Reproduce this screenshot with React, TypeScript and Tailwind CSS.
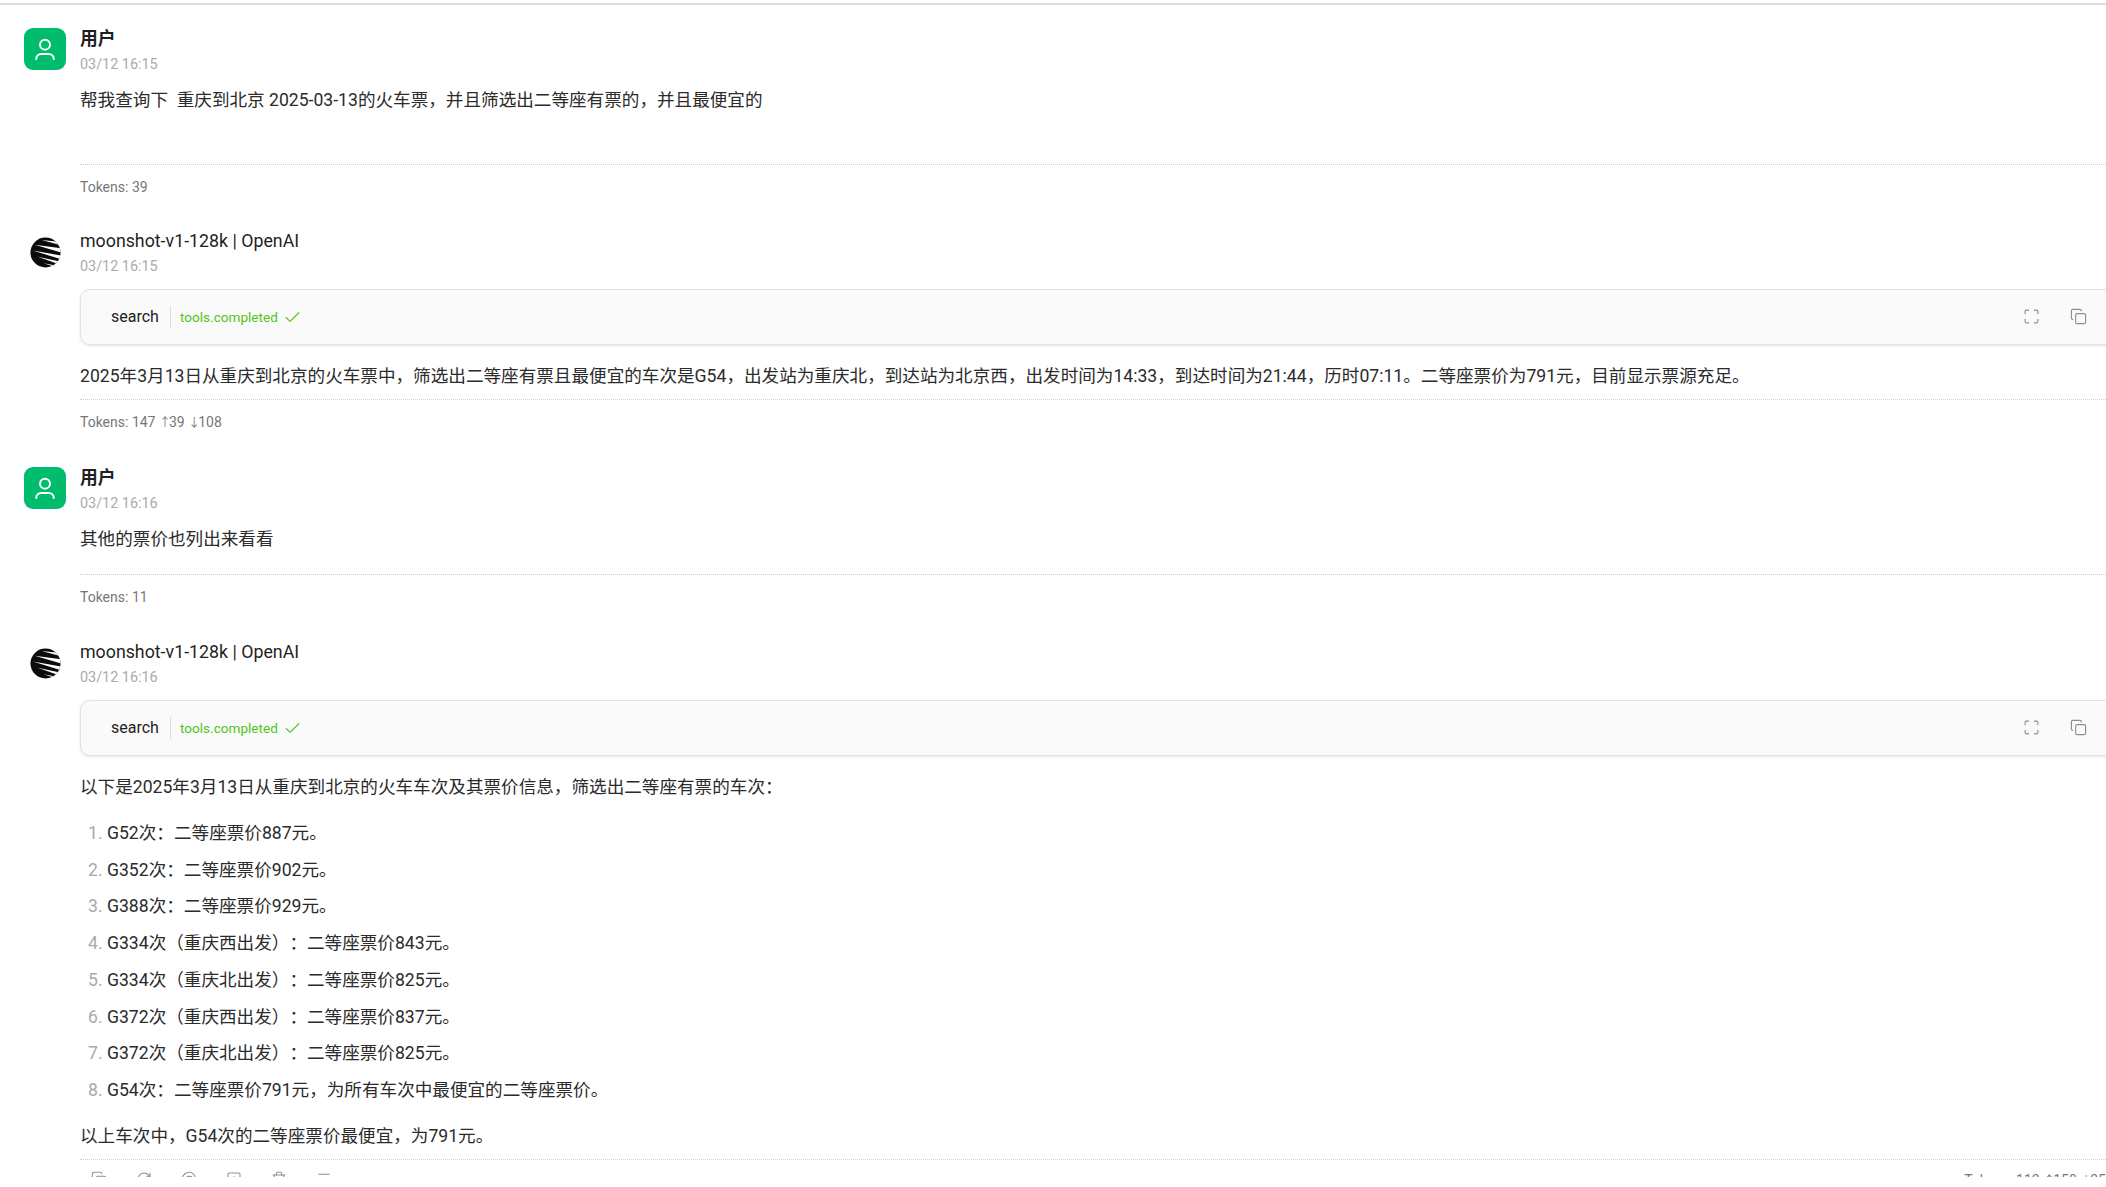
import { Check, Copy, Maximize, RotateCw, AtSign, SquarePlus, Trash2, Menu } from 'lucide-react';

const FONT = "font-['Roboto','Noto_Sans_CJK_SC',sans-serif]";
const BODY = 'text-[17.6px] leading-[28px] text-[#2b2b2b]';

function UserAvatar() {
  return (
    <div className="flex h-[42px] w-[42px] items-center justify-center rounded-[9px] bg-[#00bd6e]">
      <svg viewBox="0 0 24 24" width="30" height="30" fill="none" stroke="#fff" strokeWidth="1.6" strokeLinecap="round">
        <circle cx="12" cy="8.5" r="4" />
        <path d="M5 20c0-2.6 2-4 4-4h6c2 0 4 1.4 4 4" />
      </svg>
    </div>
  );
}

function MoonshotLogo() {
  return (
    <div className="flex h-[42px] w-[42px] items-center justify-center pt-[2px]">
      <svg viewBox="0 0 32 32" width="31" height="31">
        <defs>
          <clipPath id="moon">
            <circle cx="16" cy="16" r="15.5" />
          </clipPath>
        </defs>
        <circle cx="16" cy="16" r="15.5" fill="#0b0b0b" />
        <g clipPath="url(#moon)" fill="#fff">
          <path d="M12 3 34 5.5V9Z" />
          <path d="M5 8 34 12V16.5Z" />
          <path d="M3 14 34 19.5V23.5Z" />
          <path d="M8 20.5 34 26V29.5Z" />
          <path d="M14 27 32 30.5V33Z" />
        </g>
      </svg>
    </div>
  );
}

function Header({ avatar, name, time, bold }: { avatar: React.ReactNode; name: string; time: string; bold?: boolean }) {
  return (
    <div className="flex gap-[14px]">
      {avatar}
      <div className="-mt-[1px]">
        <div className={`h-[24px] text-[17.8px] leading-[24px] text-[#1f1f1f] ${bold ? 'font-bold' : 'font-normal'}`}>{name}</div>
        <div className="mt-[4px] text-[14.4px] leading-[20px] text-[#aaaaaa]">{time}</div>
      </div>
    </div>
  );
}

function ToolBar() {
  return (
    <div className="-mr-[10px] mt-[12px] flex h-[56px] items-center rounded-[10px] border border-[#e2e2e2] bg-[#fafafa] pl-[30px] pr-[28px] shadow-[0_1px_3px_rgba(0,0,0,0.1)]">
      <span className="pr-[11px] text-[16px] text-[#222222]">search</span>
      <span className="h-[22px] w-px bg-[#dddddd]" />
      <span className="pl-[9px] text-[13.6px] text-[#52c41a]">tools.completed</span>
      <Check size={19} strokeWidth={1.4} className="ml-[5px] text-[#52c41a]" />
      <span className="-mt-[1px] ml-auto flex items-center gap-[30px] text-[#8f8f8f]">
        <Maximize size={17} strokeWidth={1.6} />
        <Copy size={17} strokeWidth={1.6} />
      </span>
    </div>
  );
}

// arrows come from a fallback font at full width, squeeze them back
function TokenCount({ total, up, down }: { total: number; up?: number; down?: number }) {
  return (
    <>
      Tokens: {total}
      {up !== undefined && (
        <>
          {' '}
          <span className="text-[12px] tracking-[-2px]">↑</span>
          {up}
        </>
      )}
      {down !== undefined && (
        <>
          {' '}
          <span className="text-[12px] tracking-[-2px]">↓</span>
          {down}
        </>
      )}
    </>
  );
}

function Tokens({ className, children }: { className: string; children: React.ReactNode }) {
  return (
    <div className={`${className} border-t border-dotted border-[#cfcfcf] pt-[13px] text-[14px] leading-[18px] text-[#777777]`}>{children}</div>
  );
}

const FARES = [
  'G52次：二等座票价887元。',
  'G352次：二等座票价902元。',
  'G388次：二等座票价929元。',
  'G334次（重庆西出发）：二等座票价843元。',
  'G334次（重庆北出发）：二等座票价825元。',
  'G372次（重庆西出发）：二等座票价837元。',
  'G372次（重庆北出发）：二等座票价825元。',
  'G54次：二等座票价791元，为所有车次中最便宜的二等座票价。',
];

export default function App() {
  return (
    <div className={`h-[1187px] w-[2106px] overflow-hidden bg-white [text-spacing-trim:space-all] ${FONT}`}>
      <div className="mt-[3px] h-[1174px] overflow-hidden border-t-[2px] border-[#dddddd] pl-[24px]">
        {/* first user message */}
        <div className="pt-[23px]">
          <Header avatar={<UserAvatar />} name="用户" time="03/12 16:15" bold />
          <div className="pl-[56px]">
            <p className={`mt-[11px] ${BODY}`}>帮我查询下{'\u00a0'} 重庆到北京 2025-03-13的火车票，并且筛选出二等座有票的，并且最便宜的</p>
            <Tokens className="mt-[50px]">
              <TokenCount total={39} />
            </Tokens>
          </div>
        </div>

        {/* first answer */}
        <div className="pt-[34px]">
          <Header avatar={<MoonshotLogo />} name="moonshot-v1-128k | OpenAI" time="03/12 16:15" />
          <div className="pl-[56px]">
            <ToolBar />
            <p className={`mt-[17px] ${BODY}`}>2025年3月13日从重庆到北京的火车票中，筛选出二等座有票且最便宜的车次是G54，出发站为重庆北，到达站为北京西，出发时间为14:33，到达时间为21:44，历时07:11。二等座票价为791元，目前显示票源充足。</p>
            <Tokens className="mt-[9px]">
              <TokenCount total={147} up={39} down={108} />
            </Tokens>
          </div>
        </div>

        {/* second user message */}
        <div className="pt-[35px]">
          <Header avatar={<UserAvatar />} name="用户" time="03/12 16:16" bold />
          <div className="pl-[56px]">
            <p className={`mt-[11px] ${BODY}`}>其他的票价也列出来看看</p>
            <Tokens className="mt-[21px]">
              <TokenCount total={11} />
            </Tokens>
          </div>
        </div>

        {/* second answer */}
        <div className="pt-[35px]">
          <Header avatar={<MoonshotLogo />} name="moonshot-v1-128k | OpenAI" time="03/12 16:16" />
          <div className="pl-[56px]">
            <ToolBar />
            <p className={`mt-[17px] ${BODY}`}>以下是2025年3月13日从重庆到北京的火车车次及其票价信息，筛选出二等座有票的车次：</p>
            <ol className={`mt-[18px] flex list-decimal flex-col gap-[8.74px] pl-[27px] marker:text-[#aaaaaa] ${BODY}`}>
              {FARES.map((fare) => (
                <li key={fare}>{fare}</li>
              ))}
            </ol>
            <p className={`mt-[18px] ${BODY}`}>以上车次中，G54次的二等座票价最便宜，为791元。</p>
            <div className="mt-[9px] border-t border-dotted border-[#cfcfcf] pt-[11px]">
              <div className="flex items-start justify-between text-[#8f8f8f]">
                <div className="flex items-center gap-[29px] pl-[11px]">
                  <Copy size={16} strokeWidth={1.6} />
                  <RotateCw size={16} strokeWidth={1.6} />
                  <AtSign size={16} strokeWidth={1.6} />
                  <SquarePlus size={16} strokeWidth={1.6} />
                  <Trash2 size={16} strokeWidth={1.6} />
                  <Menu size={16} strokeWidth={1.6} />
                </div>
                <span className="whitespace-nowrap text-[14px] leading-[18px] text-[#777777]">
                  <TokenCount total={113} up={150} down={35} />
                </span>
              </div>
            </div>
          </div>
        </div>
      </div>
    </div>
  );
}
